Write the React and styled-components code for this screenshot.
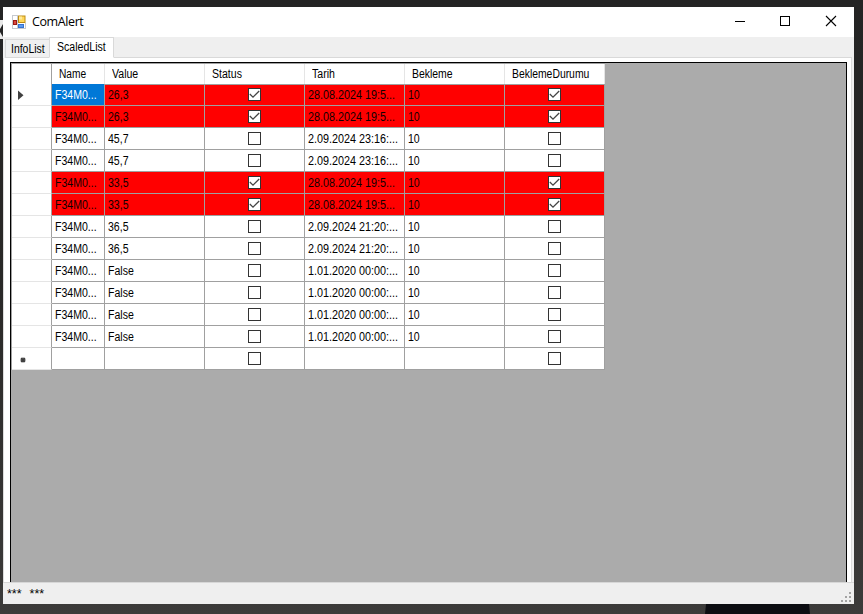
import React from "react";
import styled, { createGlobalStyle } from "styled-components";

const Global = createGlobalStyle`
  * { box-sizing: border-box; }
  body { margin: 0; overflow: hidden; font-family: "Liberation Sans", Arial, sans-serif; font-size: 12px; color: #000; }
`;

const Desktop = styled.div`
  position: relative;
  width: 863px;
  height: 614px;
  padding: 7px 9px 10px 3px;
  background: linear-gradient(180deg, #242424 0%, #292827 45%, #3c3b3a 100%);
`;
const EdgeGlyph = styled.div`
  position: absolute;
  left: 0;
  top: 20px;
  width: 3px;
  height: 19px;
  svg { display: block; }
`;
const Shade = styled.div`
  position: absolute;
  left: 705px;
  top: 604px;
  width: 105px;
  height: 10px;
  background: #0c0d12;
  clip-path: polygon(1% 0, 99% 0, 100% 100%, 0 100%);
`;
const Window = styled.main`
  position: relative;
  display: flex;
  flex-direction: column;
  width: 851px;
  height: 597px;
  background: #efefef;
`;
const TitleBar = styled.header`
  display: flex;
  align-items: center;
  height: 30px;
  background: #fff;
  padding: 0 1px 0 9px;
`;
const Title = styled.div`
  flex: 1;
  margin-left: 6px;
  font: 12.5px/16px "Open Sans", sans-serif;
  letter-spacing: -0.4px;
`;
const CaptionButtons = styled.div`
  display: flex;
`;
const CaptionButton = styled.div`
  width: 45px;
  height: 30px;
  display: flex;
  justify-content: center;
  svg { display: block; }
`;
const Tabs = styled.nav`
  display: flex;
  align-items: flex-end;
  height: 21px;
  padding-left: 2px;
`;
const Tab = styled.div`
  width: ${(p) => p.$w}px;
  height: ${(p) => (p.$active ? 21 : 19)}px;
  padding: ${(p) => (p.$active ? "2px 0 0 7px" : "2px 0 0 5px")};
  border: 1px solid #d9d9d9;
  border-bottom-color: ${(p) => (p.$active ? "#fff" : "#d9d9d9")};
  border-right-width: ${(p) => (p.$active ? 1 : 0)}px;
  background: ${(p) => (p.$active ? "#fff" : "#f0f0f0")};
  line-height: 15px;
`;
const TabFill = styled.div`
  flex: 1;
  height: 1px;
  background: #d9d9d9;
  margin-right: 2px;
`;
const Page = styled.section`
  height: 524px;
  margin: 0 2px 0 0;
  padding: 4px 4px 0 6px;
  background: #fff;
  border-left: 1px solid #dcdcdc;
  border-right: 1px solid #dcdcdc;
`;
const GridFrame = styled.div`
  height: 520px;
  border: 1px solid #000;
  border-bottom: 0;
  background: #ababab;
`;
const Grid = styled.div`
  width: 594px;
  border-top: 1px solid #a0a0a0;
  border-left: 1px solid #a0a0a0;
`;
const Row = styled.div`
  display: grid;
  grid-template-columns: 40px 53px 100px 100px 100px 100px 100px;
  height: ${(p) => (p.$head ? 20 : 22)}px;
  background: ${(p) => (p.$alert ? "#f00" : "#fff")};
`;
const HeadCell = styled.div`
  padding-left: 7px;
  line-height: 20px;
  white-space: nowrap;
  border-right: 1px solid #e5e5e5;
  border-bottom: 1px solid #a0a0a0;
`;
const RowHead = styled.div`
  display: flex;
  align-items: center;
  background: #fff;
  border-right: 1px solid #a0a0a0;
  border-bottom: 1px solid ${(p) => (p.$dark ? "#a0a0a0" : "#e5e5e5")};
`;
const Cell = styled.div`
  display: flex;
  align-items: center;
  justify-content: ${(p) => (p.$center ? "center" : "flex-start")};
  padding-left: ${(p) => (p.$center ? 0 : 3)}px;
  border-right: 1px solid #a0a0a0;
  border-bottom: 1px solid #a0a0a0;
  white-space: nowrap;
  overflow: hidden;
  background: ${(p) => (p.$selected ? "#0078d7" : "transparent")};
  color: ${(p) => (p.$selected ? "#fff" : p.$alert ? "#100" : "#000")};
`;
const Text = styled.span`
  display: inline-block;
  transform: scaleX(${(p) => p.$sx || 0.88});
  transform-origin: 0 50%;
  white-space: pre;
`;
const Box = styled.div`
  width: 13px;
  height: 13px;
  border: 1px solid #333;
  background: #fff;
  svg { display: block; }
`;
const StatusBar = styled.footer`
  display: flex;
  justify-content: space-between;
  height: 22px;
  border-top: 1px solid #d7d7d7;
  padding: 2px 3px 0 4px;
  line-height: 18px;
`;
const Marks = styled.div`
  display: flex;
  gap: 8px;
  font-size: 12.5px;
`;
const Grip = styled.div`
  align-self: flex-end;
  margin-bottom: 2px;
  svg { display: block; }
`;

const Check = ({ on }) => (
  <Box>
    {on && (
      <svg width="11" height="11" viewBox="0 0 11 11">
        <path d="M.8 5 4 8.2 10.2 2" fill="none" stroke="#444" strokeWidth="1.3" />
      </svg>
    )}
  </Box>
);

const AppIcon = () => (
  <svg width="14" height="14" viewBox="0 0 14 14">
    <path d="M0 .5H6M.5 0V14M0 13.5H14M13.5 8V14M5.5 0V14" fill="none" stroke="#c5c9cf" />
    <rect x="6.5" y="1" width="6.5" height="6.5" fill="#ffd75a" stroke="#bd8b12" />
    <rect x="7" y="1.5" width="3" height="3" fill="#ffe99b" />
    <rect x="1.5" y="5.5" width="3" height="4" fill="#d9483d" stroke="#9a1812" />
    <rect x="6.5" y="9.5" width="5" height="3" fill="#5c9aef" stroke="#3672cf" />
  </svg>
);

const headers = [["Name", 0.85], ["Value", 0.88], ["Status", 0.88], ["Tarih", 0.88], ["Bekleme", 0.87], ["BeklemeDurumu", 0.865]];
const rows = [
  ["26,3", "28.08.2024 19:5...", true],
  ["26,3", "28.08.2024 19:5...", true],
  ["45,7", "2.09.2024 23:16:...", false],
  ["45,7", "2.09.2024 23:16:...", false],
  ["33,5", "28.08.2024 19:5...", true],
  ["33,5", "28.08.2024 19:5...", true],
  ["36,5", "2.09.2024 21:20:...", false],
  ["36,5", "2.09.2024 21:20:...", false],
  ["False", "1.01.2020 00:00:...", false],
  ["False", "1.01.2020 00:00:...", false],
  ["False", "1.01.2020 00:00:...", false],
  ["False", "1.01.2020 00:00:...", false],
];
const dots = [[8, 0], [4, 4], [8, 4], [0, 8], [4, 8], [8, 8]];

export default function App() {
  return (
    <Desktop>
      <Global />
      <EdgeGlyph>
        <svg width="3" height="19"><path d="M0 0H3V4L0 9ZM0 12 3 17V19H0Z" fill="#e8e8e8" /></svg>
      </EdgeGlyph>
      <Shade />
      <Window>
        <TitleBar>
          <AppIcon />
          <Title>ComAlert</Title>
          <CaptionButtons>
            <CaptionButton><svg width="45" height="30"><path d="M17 14.5H27" stroke="#000" /></svg></CaptionButton>
            <CaptionButton><svg width="45" height="30"><rect x="17.5" y="9.5" width="9" height="9" fill="none" stroke="#000" /></svg></CaptionButton>
            <CaptionButton><svg width="45" height="30"><path d="M18 9 28 19M28 9 18 19" stroke="#000" strokeWidth="1.1" /></svg></CaptionButton>
          </CaptionButtons>
        </TitleBar>
        <Tabs>
          <Tab $w={44}><Text $sx={0.87}>InfoList</Text></Tab>
          <Tab $w={65} $active><Text $sx={0.88}>ScaledList</Text></Tab>
          <TabFill />
        </Tabs>
        <Page>
          <GridFrame>
            <Grid>
              <Row $head>
                <RowHead $dark />
                {headers.map(([h, s]) => <HeadCell key={h}><Text $sx={s}>{h}</Text></HeadCell>)}
              </Row>
              {rows.map(([value, date, on], i) => (
                <Row key={i} $alert={on}>
                  <RowHead>
                    {i === 0 && <svg width="12" height="12"><path d="M6 1.5V11L11.5 6.2Z" fill="#404040" /></svg>}
                  </RowHead>
                  <Cell $selected={i === 0} $alert={on}><Text>F34M0...</Text></Cell>
                  <Cell $alert={on}><Text>{value}</Text></Cell>
                  <Cell $center><Check on={on} /></Cell>
                  <Cell $alert={on}><Text $sx={0.9}>{date}</Text></Cell>
                  <Cell $alert={on}><Text>10</Text></Cell>
                  <Cell $center><Check on={on} /></Cell>
                </Row>
              ))}
              <Row>
                <RowHead>
                  <svg width="16" height="12"><path d="M11 4.5V9.5M8.5 7H13.5M9 5 13 9M13 5 9 9" stroke="#404040" strokeWidth="1.3" /></svg>
                </RowHead>
                <Cell /><Cell />
                <Cell $center><Check /></Cell>
                <Cell /><Cell />
                <Cell $center><Check /></Cell>
              </Row>
            </Grid>
          </GridFrame>
        </Page>
        <StatusBar>
          <Marks><span>***</span><span>***</span></Marks>
          <Grip>
            <svg width="10" height="10">{dots.map(([x, y]) => <rect key={x + "-" + y} x={x} y={y} width="2" height="2" fill="#a3a3a3" />)}</svg>
          </Grip>
        </StatusBar>
      </Window>
    </Desktop>
  );
}
